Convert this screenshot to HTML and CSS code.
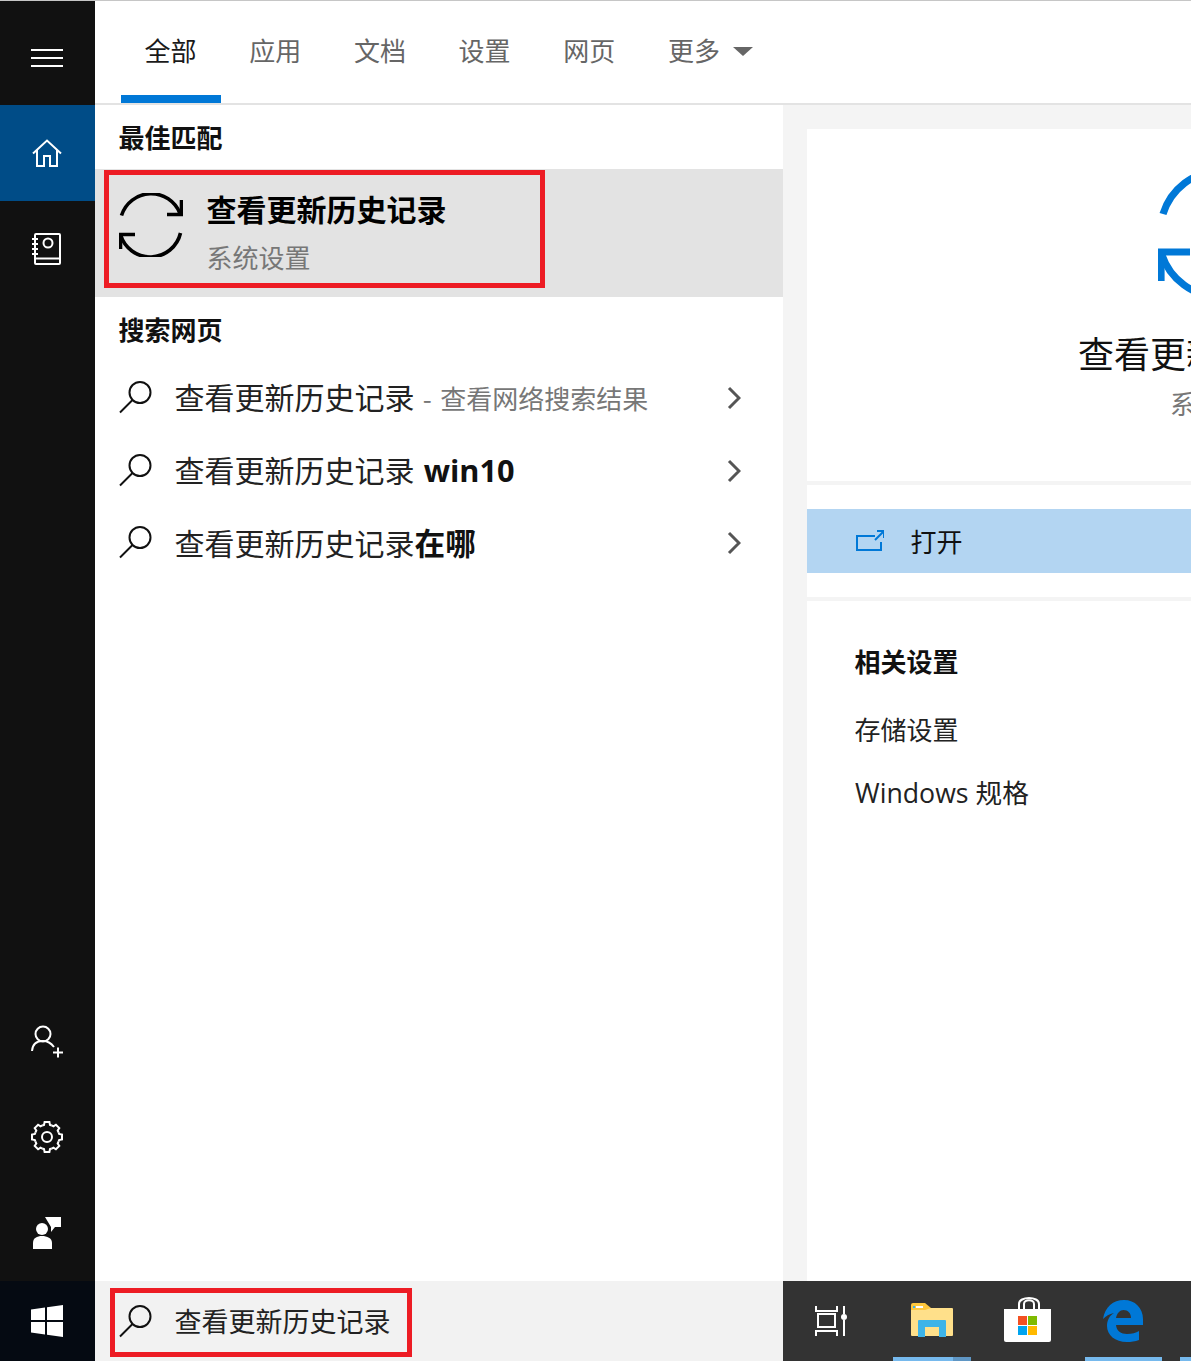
FILE: index.html
```html
<!DOCTYPE html>
<html lang="zh-CN">
<head>
<meta charset="utf-8">
<title>查看更新历史记录</title>
<link rel="stylesheet" href="styles.css">
</head>
<body>
<svg class="defs" width="0" height="0" aria-hidden="true">
  <defs>
    <symbol id="lens" viewBox="0 0 34 34"><circle cx="21" cy="12.5" r="10.5" fill="none" stroke="currentColor" stroke-width="2"/><path d="M13.500 20 L1 32.500" fill="none" stroke="currentColor" stroke-width="2"/></symbol>
    <symbol id="sync" viewBox="0 0 64 64"><path d="M2.500 22.500 A31 31 0 0 1 61 20.500 M1.500 41.500 A31 31 0 0 0 61.500 40" fill="none" stroke="currentColor" stroke-width="3.600"/><path d="M48 21.500 H62.500 V7 M16 41.500 H1.500 V56" fill="none" stroke="currentColor" stroke-width="3.600"/></symbol>
    <symbol id="chev" viewBox="0 0 14 24"><path d="M2 2 L12 12 L2 22" fill="none" stroke="currentColor" stroke-width="3"/></symbol>
  </defs>
</svg>
<div class="screen">
  <nav class="rail">
    <div class="rail-top">
      <div class="rail-menu">
        <svg width="32" height="18" viewBox="0 0 32 18"><path d="M0 1H32M0 9H32M0 17H32" stroke="#fff" stroke-width="2"/></svg>
      </div>
      <div class="rail-cell rail-on">
        <svg width="30" height="28" viewBox="0 0 30 28"><path d="M1 14.500 L15 1.500 L29 14.500 M5 11 V27 H12 V17 H18 V27 H25 V11" fill="none" stroke="#fff" stroke-width="2"/></svg>
      </div>
      <div class="rail-cell">
        <svg width="30" height="32" viewBox="0 0 30 32"><rect x="3" y="1" width="25" height="30" rx="1" fill="none" stroke="#fff" stroke-width="2"/><path d="M3 25.500 H28 M0 6H6M0 11H6M0 16H6M0 21H6" stroke="#fff" stroke-width="2"/><circle cx="16" cy="10" r="4.500" fill="none" stroke="#fff" stroke-width="2"/></svg>
      </div>
    </div>
    <div class="rail-bottom">
      <div class="rail-cell">
        <svg width="32" height="33" viewBox="0 0 32 33"><circle cx="12" cy="9" r="7.500" fill="none" stroke="#fff" stroke-width="2"/><path d="M1 26 C1.500 19 6 16 12 16 C17 16 20 18 23 22" fill="none" stroke="#fff" stroke-width="2"/><path d="M22 27.500 H32 M27 22.500 V32.500" stroke="#fff" stroke-width="2"/></svg>
      </div>
      <div class="rail-cell">
        <svg width="32" height="32" viewBox="0 0 32 32" fill="none" stroke="#fff" stroke-width="2"><circle cx="16" cy="16" r="5"/><path d="M11.200 4.500 L13 3.900 L13.600 1 H18.400 L19 3.900 L20.800 4.500"/><path transform="rotate(45 16 16)" d="M11.200 4.500 L13 3.900 L13.600 1 H18.400 L19 3.900 L20.800 4.500"/><path transform="rotate(90 16 16)" d="M11.200 4.500 L13 3.900 L13.600 1 H18.400 L19 3.900 L20.800 4.500"/><path transform="rotate(135 16 16)" d="M11.200 4.500 L13 3.900 L13.600 1 H18.400 L19 3.900 L20.800 4.500"/><path transform="rotate(180 16 16)" d="M11.200 4.500 L13 3.900 L13.600 1 H18.400 L19 3.900 L20.800 4.500"/><path transform="rotate(225 16 16)" d="M11.200 4.500 L13 3.900 L13.600 1 H18.400 L19 3.900 L20.800 4.500"/><path transform="rotate(270 16 16)" d="M11.200 4.500 L13 3.900 L13.600 1 H18.400 L19 3.900 L20.800 4.500"/><path transform="rotate(315 16 16)" d="M11.200 4.500 L13 3.900 L13.600 1 H18.400 L19 3.900 L20.800 4.500"/></svg>
      </div>
      <div class="rail-cell">
        <svg width="28" height="32" viewBox="0 0 28 32"><circle cx="9" cy="12" r="6" fill="#fff"/><path d="M0 32 V26 C0 21 4 19 9 19 C14 19 19 21 19 26 V32 Z" fill="#fff"/><path d="M12 0 H28 V10 H22 L18 15 V10 L15 5 Z" fill="#fff"/></svg>
      </div>
    </div>
  </nav>

  <header class="tabs">
    <div class="tab tab-on">全部</div>
    <div class="tab">应用</div>
    <div class="tab">文档</div>
    <div class="tab">设置</div>
    <div class="tab">网页</div>
    <div class="tab">更多<span class="caret"></span></div>
  </header>

  <main class="results">
    <h2 class="section-head">最佳匹配</h2>
    <div class="best">
      <svg class="best-icon"><use href="#sync"/></svg>
      <div class="best-text">
        <div class="best-title">查看更新历史记录</div>
        <div class="best-sub">系统设置</div>
      </div>
      <div class="red-box red-best"></div>
    </div>
    <h2 class="section-head section-web">搜索网页</h2>
    <div class="row">
      <svg class="lens"><use href="#lens"/></svg>
      <div class="row-text">查看更新历史记录<span class="row-note"> - 查看网络搜索结果</span></div>
      <svg class="chev"><use href="#chev"/></svg>
    </div>
    <div class="row">
      <svg class="lens"><use href="#lens"/></svg>
      <div class="row-text">查看更新历史记录 <b class="row-latin">win10</b></div>
      <svg class="chev"><use href="#chev"/></svg>
    </div>
    <div class="row">
      <svg class="lens"><use href="#lens"/></svg>
      <div class="row-text">查看更新历史记录<b>在哪</b></div>
      <svg class="chev"><use href="#chev"/></svg>
    </div>
  </main>

  <aside class="detail">
    <section class="card card-hero">
      <svg class="hero-icon"><use href="#sync"/></svg>
      <div class="hero-title">查看更新历史记录</div>
      <div class="hero-sub">系统设置</div>
    </section>
    <section class="card card-action">
      <div class="open-row">
        <svg width="28" height="22" viewBox="0 0 28 22" fill="none" stroke="#0078d7" stroke-width="2"><path d="M19 6 H1 V20 H25 V12"/><path d="M19 10 L27 2 M21 1 H28 V8"/></svg>
        <span class="open-label">打开</span>
      </div>
    </section>
    <section class="card card-links">
      <h3 class="links-head">相关设置</h3>
      <div class="link">存储设置</div>
      <div class="link link-last">Windows 规格</div>
    </section>
  </aside>

  <div class="start">
    <svg width="32" height="32" viewBox="0 0 32 32"><path d="M0 4.500 L14 2.600 V15 H0 Z M16 2.300 L32 0 V15 H16 Z M0 17 H14 V29.400 L0 27.500 Z M16 17 H32 V32 L16 29.700 Z" fill="#fff"/></svg>
  </div>
  <div class="searchbar">
    <svg class="lens"><use href="#lens"/></svg>
    <span class="search-text">查看更新历史记录</span>
    <div class="red-box red-search"></div>
  </div>
  <div class="taskbar">
    <svg class="task-view" width="32" height="30" viewBox="0 0 32 30" fill="none" stroke="#fff" stroke-width="2"><path d="M1 0 V5 H22 V0 M3 8 H20 V21 H3 Z M1 30 V25 H22 V30 M29 0 V8 M29 14 V30"/><circle cx="29" cy="11" r="3" fill="#fff" stroke="none"/></svg>
    <svg class="task-folder" width="42" height="34" viewBox="0 0 42 34"><path d="M0 5 H41 Q42 5 42 6 V32 Q42 33 41 33 H1 Q0 33 0 32 Z" fill="#ffe08a"/><path d="M0 2 Q0 0 2 0 H14 L20 5 L14 7 H0 Z" fill="#ffc83d"/><path d="M2 3 H4 V5 H2 Z" fill="#3db4e8"/><path d="M5 3 H12 V5 H5 Z" fill="#fff"/><path d="M7 34 V18 Q7 17 8 17 H34 Q35 17 35 18 V34 H28 V24 H14 V34 Z" fill="#3db4e8"/></svg>
    <svg class="task-store" width="47" height="45" viewBox="0 0 47 45"><path d="M15 13 V7 C15 -1 35 -1 35 7 V13 M20 13 V7 C20 2 30 2 30 7 V13" fill="none" stroke="#fff" stroke-width="2"/><path d="M0 12 H47 V43 Q47 45 45 45 H2 Q0 45 0 43 Z" fill="#fff"/><rect x="14" y="19" width="9" height="9" fill="#f25022"/><rect x="24" y="19" width="9" height="9" fill="#7fba00"/><rect x="14" y="29" width="9" height="9" fill="#00a4ef"/><rect x="24" y="29" width="9" height="9" fill="#ffb900"/></svg>
    <svg class="task-edge" width="40" height="42" viewBox="0 0 40 42"><path fill-rule="evenodd" d="M0 19 C2 7 10 0 21 0 C32 0 40 8 40 19 V25 H13 C13.500 31 18 34 24 34 C29 34 33 33 36 31 V40 C32 41.500 28 42 24 42 C12 42 4 35 4 26 C4 21 6 16 11 13 C6 14 3 16 0 19 Z M13 18 H28 C28 13 25 10 20.500 10 C17 10 14 13 13 18 Z" fill="#0078d7"/></svg>
    <div class="run run-a"></div>
    <div class="run run-b"></div>
    <div class="run run-c"></div>
    <div class="run run-d"></div>
  </div>
</div>
</body>
</html>
```
FILE: styles.css
```css
* { box-sizing: border-box; }
html, body { margin: 0; padding: 0; background: #fff; }
body { font-family: "Noto Sans CJK SC", "Open Sans", sans-serif; color: #111; overflow: hidden; }
.defs { position: absolute; }
.screen {
  width: 1191px; height: 1361px; overflow: hidden;
  border-top: 1px solid #c6c6c6;
  display: grid;
  grid-template-columns: 95px 688px 408px;
  grid-template-rows: 104px 1176px 80px;
}

/* left rail */
.rail { grid-row: 1 / 3; grid-column: 1; background: #111; display: flex; flex-direction: column; justify-content: space-between; }
.rail-menu { height: 104px; display: flex; align-items: center; justify-content: center; padding: 10px 1px 0 0; }
.rail-cell { height: 96px; display: flex; align-items: center; justify-content: center; padding-right: 1px; }
.rail-on { background: #004c87; }

/* tabs */
.tabs { grid-column: 2 / 4; grid-row: 1; display: flex; gap: 4.700px; padding-left: 26px; background: #fff; border-bottom: 2px solid #e3e3e3; }
.tab { position: relative; width: 100px; padding-left: 23.500px; height: 102px; font-size: 26px; line-height: 98px; color: #666; white-space: nowrap; }
.tab-on { color: #1a1a1a; border-bottom: 8px solid #0078d7; }
.caret { display: inline-block; margin-left: 13px; vertical-align: 5px; border-left: 10px solid transparent; border-right: 10px solid transparent; border-top: 9px solid #666; }

/* results */
.results { grid-column: 2; grid-row: 2; background: #fff; display: flex; flex-direction: column; }
.section-head { margin: 0; height: 64px; padding-left: 23.500px; font-size: 26px; font-weight: 700; line-height: 64px; color: #111; }
.section-web { line-height: 63px; }
.best { position: relative; height: 128px; background: #e3e3e3; display: flex; align-items: center; padding-left: 24px; gap: 23.500px; }
.best-icon { width: 64px; height: 64px; color: #000; margin-bottom: 16px; flex: none; }
.best-text { display: flex; flex-direction: column; margin-top: 2px; }
.best-title { font-size: 30px; font-weight: 700; line-height: 44px; color: #000; }
.best-sub { margin-top: 2px; font-size: 26px; line-height: 50px; color: #777; }
.red-box { position: absolute; border: 5px solid #ed1c24; }
.red-best { left: 9px; top: 1px; width: 441px; height: 118px; }
.row { height: 72.500px; display: flex; align-items: center; padding-left: 24px; }
.lens { width: 34px; height: 34px; color: #111; flex: none; }
.row-text { margin-left: 21.500px; flex: 1; font-size: 30px; line-height: 40px; color: #222; white-space: nowrap; }
.row-text b { font-family: "Open Sans", "Noto Sans CJK SC", sans-serif; font-size: 30.700px; font-weight: 700; color: #111; }
.row-text .row-latin { margin-left: 2.500px; }
.row-note { font-size: 26px; color: #777; word-spacing: 2.500px; }
.chev { width: 14px; height: 24px; color: #555; margin: 2px 42px 0 0; flex: none; }

/* detail */
.detail { grid-column: 3; grid-row: 2; background: #f4f4f4; padding: 24px 0 0 24px; display: flex; flex-direction: column; gap: 4px; overflow: hidden; }
.card { background: #fff; width: 830px; flex: none; }
.card-hero { height: 352px; padding-top: 40px; display: flex; flex-direction: column; align-items: center; }
.hero-icon { width: 128px; height: 128px; color: #0078d7; flex: none; }
.hero-title { margin-top: 28px; font-size: 36px; line-height: 54px; color: #111; white-space: nowrap; }
.hero-sub { font-size: 26px; line-height: 48px; color: #777; white-space: nowrap; }
.card-action { height: 112px; padding-top: 24px; }
.open-row { height: 64px; background: #b3d5f2; display: flex; align-items: center; padding-left: 49px; gap: 26.500px; font-size: 26px; color: #111; }
.open-label { margin-bottom: 2px; }
.card-links { flex: 1; padding: 39px 0 0 47.500px; }
.links-head { margin: 0; font-size: 26px; font-weight: 700; line-height: 42px; color: #111; }
.link { margin-top: 26px; font-size: 26px; line-height: 42px; color: #222; }
.link-last { margin-top: 22px; margin-left: 0.500px; font-family: "Open Sans", "Noto Sans CJK SC", sans-serif; font-size: 26.700px; }

/* bottom */
.start { grid-column: 1; grid-row: 3; background: #050a12; display: flex; align-items: center; justify-content: center; padding-right: 1px; }
.searchbar { grid-column: 2; grid-row: 3; position: relative; background: #f2f2f2; display: flex; align-items: center; padding-left: 24px; }
.search-text { margin: 0 0 2px 21.500px; font-size: 27px; color: #222; white-space: nowrap; }
.red-search { left: 15px; top: 7px; width: 302px; height: 69px; }
.taskbar { grid-column: 3; grid-row: 3; position: relative; background: #333; }
.taskbar svg { position: absolute; }
.task-view { left: 32px; top: 25px; }
.task-folder { left: 128px; top: 22px; }
.task-store { left: 221px; top: 16px; }
.task-edge { left: 320px; top: 19px; }
.run { position: absolute; bottom: 0; height: 4px; background: #76b9ed; }
.run-a { left: 110px; width: 60px; }
.run-b { left: 170px; width: 18px; background: #5f96c4; }
.run-c { left: 302px; width: 77px; }
.run-d { left: 397px; width: 11px; }
```
